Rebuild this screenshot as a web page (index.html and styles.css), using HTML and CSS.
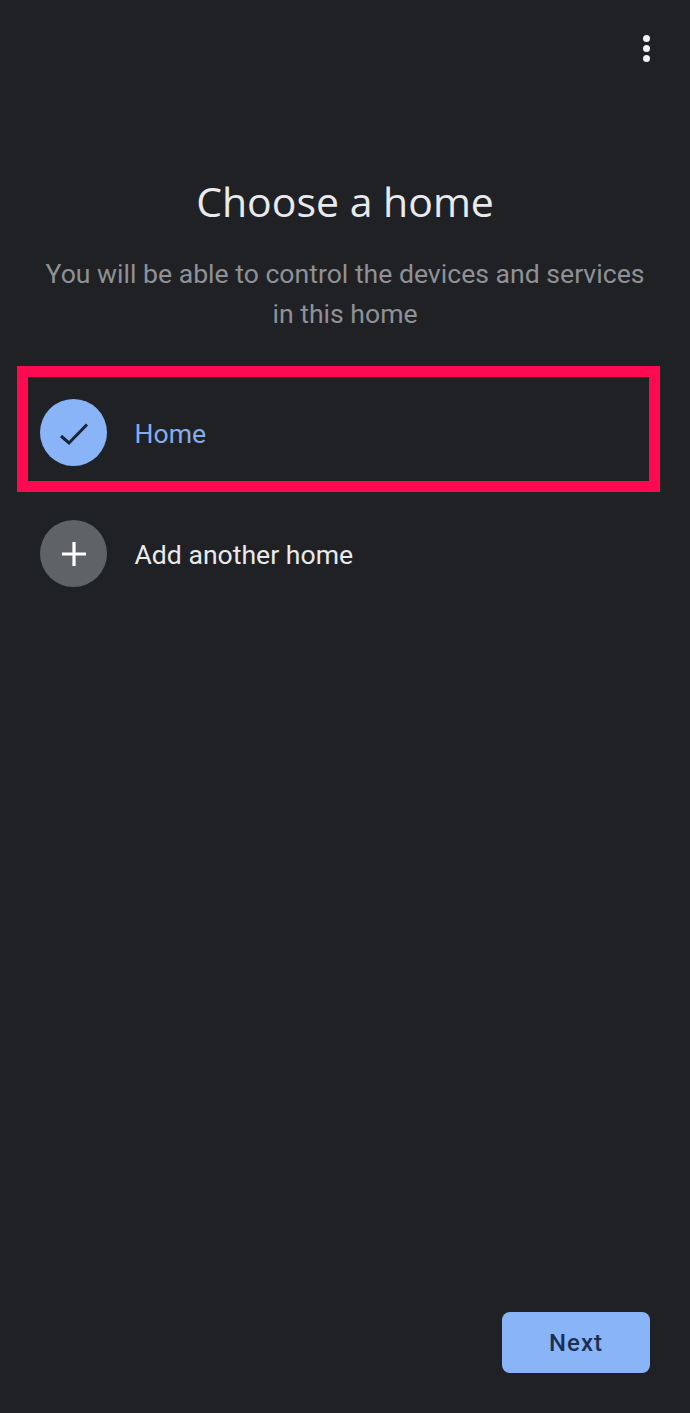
FILE: index.html
```html
<!DOCTYPE html>
<html>
<head>
    <meta charset="utf-8">
    <title>Choose a home</title>
    <link rel="stylesheet" href="styles.css">
</head>
<body>
    <div class="screen">
        <div class="top-bar">
            <button class="menu" aria-label="More options">
                <span class="dot"></span>
                <span class="dot"></span>
                <span class="dot"></span>
            </button>
        </div>

        <h1>Choose a home</h1>
        <p class="subtitle">You will be able to control the devices and services in this home</p>

        <div class="home-list">
            <div class="home-row selected">
                <span class="badge badge-blue">
                    <svg width="34" height="34" viewBox="0 0 34 34" fill="none" stroke="#17243a" stroke-width="3">
                        <path d="M4 20 L12 27 L30 8.5"/>
                    </svg>
                </span>
                <span class="row-label">Home</span>
            </div>
            <div class="home-row">
                <span class="badge badge-grey">
                    <svg width="26" height="26" viewBox="0 0 26 26" fill="none" stroke="#fff" stroke-width="3.2">
                        <path d="M13 1 V25 M1 13 H25"/>
                    </svg>
                </span>
                <span class="row-label">Add another home</span>
            </div>
        </div>

        <div class="footer">
            <button class="next">Next</button>
        </div>
    </div>
</body>
</html>
```

FILE: styles.css
```css
body {
    margin: 0;
    background: #202125;
    font-family: Roboto, sans-serif;
    color: #e8eaed;
}

.screen {
    height: 1413px;
    display: flex;
    flex-direction: column;
    overflow: hidden;
}

.top-bar {
    display: flex;
    justify-content: flex-end;
    padding: 35px 40px 0 0;
}

.menu {
    display: flex;
    flex-direction: column;
    gap: 3px;
    padding: 0;
    background: none;
    border: none;
}

.dot {
    width: 7px;
    height: 7px;
    border-radius: 50%;
    background: #f1f1f1;
}

h1 {
    margin: 111px 0 0;
    font-family: "Open Sans", sans-serif;
    font-size: 41px;
    font-weight: 400;
    line-height: 56px;
    text-align: center;
    color: #e8eaed;
}

.subtitle {
    margin: 25px auto 0;
    width: 620px;
    font-size: 26.6px;
    line-height: 40px;
    text-align: center;
    color: #8f9196;
}

.home-list {
    margin: 32px 30px 0 17px;
    display: flex;
    flex-direction: column;
    gap: 28px;
}

.home-row {
    display: flex;
    align-items: center;
    gap: 27.5px;
    padding-left: 23px;
}

.home-row.selected {
    border: 11px solid #ff0a50;
    padding: 22px 0 15px 12px;
}

.badge {
    flex: none;
    width: 67px;
    height: 67px;
    border-radius: 50%;
    display: flex;
    align-items: center;
    justify-content: center;
}

.badge-blue {
    background: #8ab4f8;
}

.badge-grey {
    background: #5f6368;
}

.row-label {
    padding-top: 2px;
    font-size: 26.6px;
    color: #e8eaed;
}

.selected .row-label {
    color: #85ade9;
}

.footer {
    margin-top: auto;
    display: flex;
    justify-content: flex-end;
    padding: 0 40px 40px 0;
}

.next {
    width: 148px;
    height: 61px;
    border: none;
    border-radius: 8px;
    background: #8ab4f8;
    color: #1b3152;
    font-family: Roboto, sans-serif;
    font-size: 24px;
    font-weight: 500;
    letter-spacing: 1px;
}
```
